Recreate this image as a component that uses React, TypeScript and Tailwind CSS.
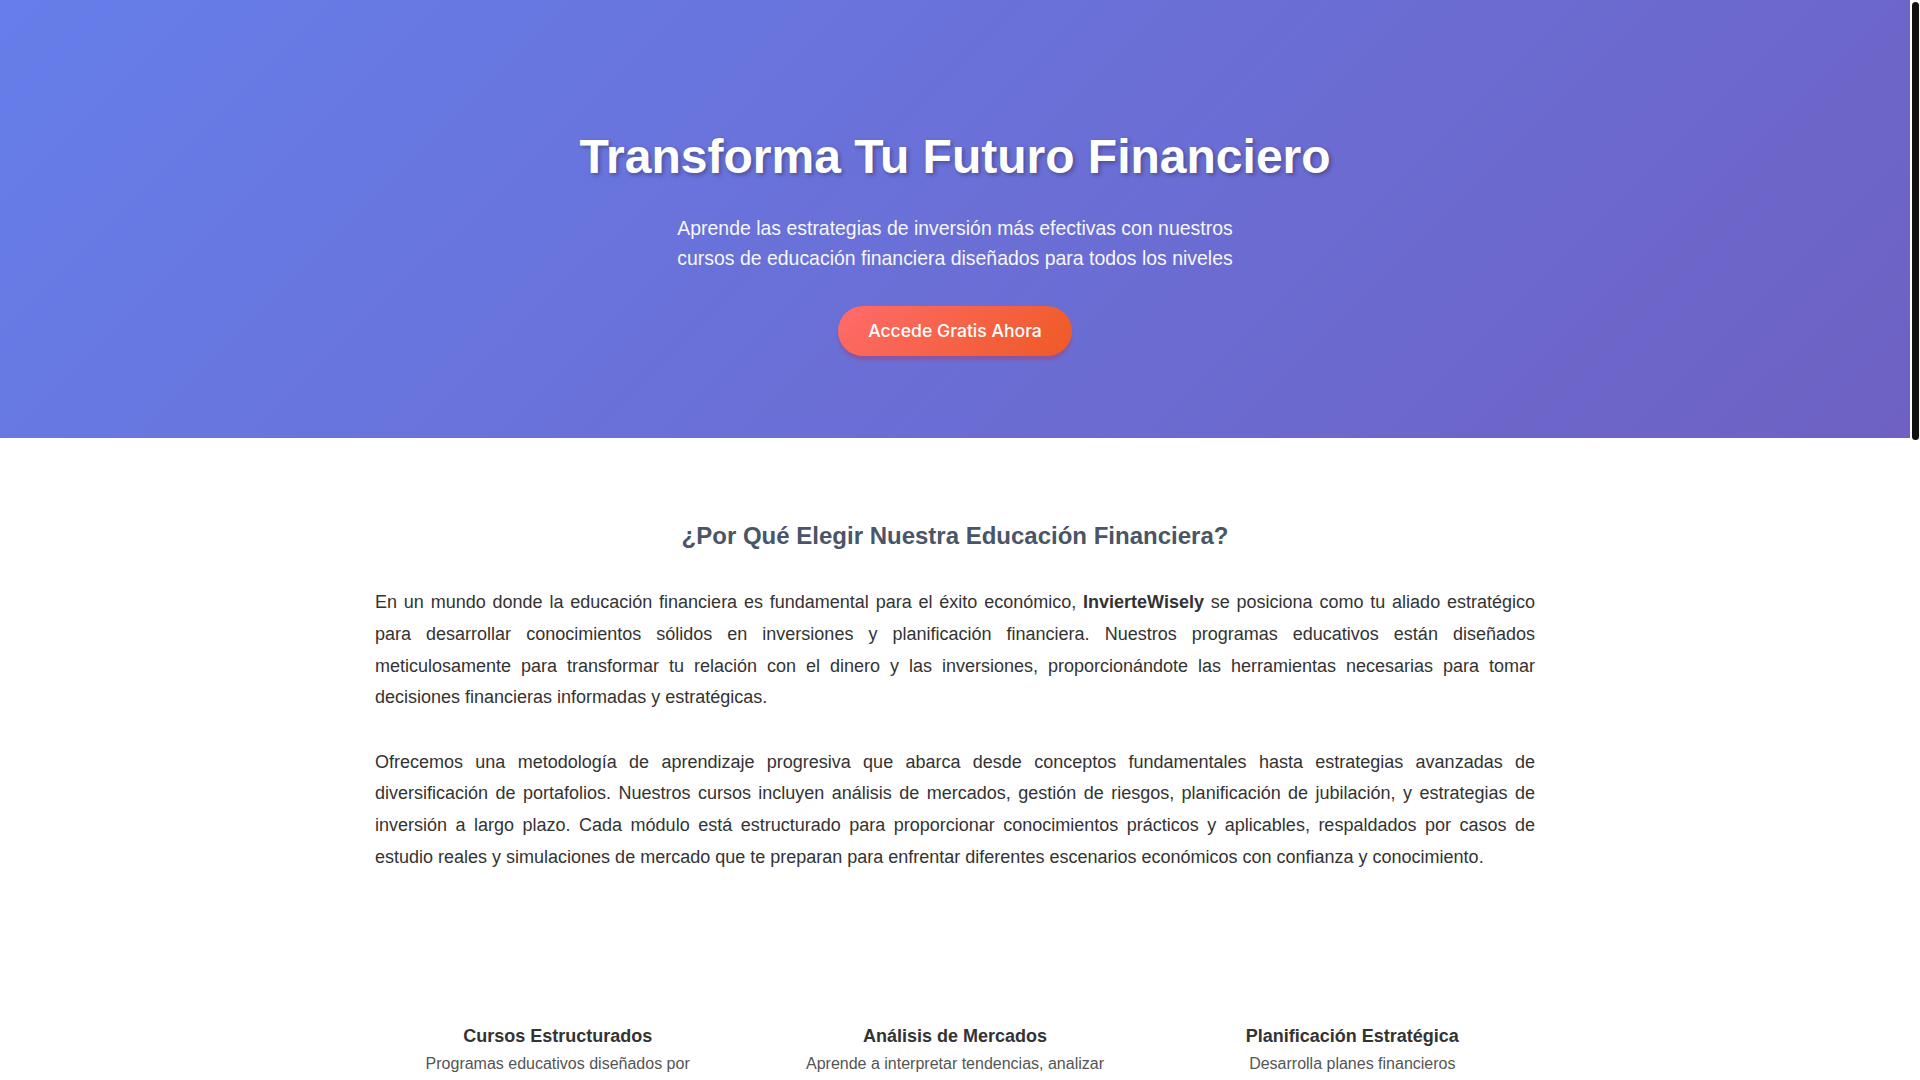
import React from "react";

const features = [
  {
    title: "Cursos Estructurados",
    text: "Programas educativos diseñados por expertos en finanzas, organizados desde el nivel básico hasta el avanzado.",
  },
  {
    title: "Análisis de Mercados",
    text: "Aprende a interpretar tendencias, analizar datos económicos y tomar decisiones de inversión fundamentadas.",
  },
  {
    title: "Planificación Estratégica",
    text: "Desarrolla planes financieros personalizados para alcanzar tus metas a corto, mediano y largo plazo.",
  },
];

const courses = [
  { name: "Fundamentos de Inversión", level: "Principiante", weeks: "6 semanas" },
  { name: "Gestión de Portafolios", level: "Intermedio", weeks: "8 semanas" },
  { name: "Estrategias Avanzadas", level: "Avanzado", weeks: "10 semanas" },
];

export default function App() {
  return (
    <div className="flex min-h-screen bg-white font-['Liberation_Sans',Arial,sans-serif]">
      <main className="flex-1 min-w-0">
        <section className="bg-[linear-gradient(135deg,#667eea_0%,#6e61c3_100%)] text-white text-center pt-[128px] pb-[82px] px-5">
          <h1 className="text-[48px] font-bold leading-[1.2] mb-[27px] [text-shadow:2px_2px_4px_rgba(0,0,0,0.3)]">
            Transforma Tu Futuro Financiero
          </h1>
          <p className="text-[19.45px] leading-[30.7px] max-w-[600px] mx-auto mb-8 opacity-95">
            Aprende las estrategias de inversión más efectivas con nuestros cursos de educación financiera diseñados para todos los niveles
          </p>
          <div className="flex justify-center">
            <button className="font-['Inter',sans-serif] font-medium text-[17.6px] leading-[21.6px] px-[30px] py-[14px] rounded-full text-white bg-[linear-gradient(135deg,#ff6b6b_0%,#ee5a24_100%)] shadow-[0_4px_3px_rgba(160,70,130,0.6)]">
              Accede Gratis Ahora
            </button>
          </div>
        </section>

        <section className="pt-[84px] pb-20">
          <div className="max-w-[1200px] mx-auto px-5">
            <h2 className="text-center text-[24px] font-bold leading-[1.2] text-[#4a5568] mb-[37px]">
              ¿Por Qué Elegir Nuestra Educación Financiera?
            </h2>
            <p className="text-[18px] leading-[31.6px] text-justify text-[#333] mb-[33px]">
              En un mundo donde la educación financiera es fundamental para el éxito económico, <strong>InvierteWisely</strong> se posiciona como tu aliado estratégico para desarrollar conocimientos sólidos en inversiones y planificación financiera. Nuestros programas educativos están diseñados meticulosamente para transformar tu relación con el dinero y las inversiones, proporcionándote las herramientas necesarias para tomar decisiones financieras informadas y estratégicas.
            </p>
            <p className="text-[18px] leading-[31.6px] text-justify text-[#333]">
              Ofrecemos una metodología de aprendizaje progresiva que abarca desde conceptos fundamentales hasta estrategias avanzadas de diversificación de portafolios. Nuestros cursos incluyen análisis de mercados, gestión de riesgos, planificación de jubilación, y estrategias de inversión a largo plazo. Cada módulo está estructurado para proporcionar conocimientos prácticos y aplicables, respaldados por casos de estudio reales y simulaciones de mercado que te preparan para enfrentar diferentes escenarios económicos con confianza y conocimiento.
            </p>

            <div className="grid grid-cols-3 gap-8 mt-12">
              {features.map((f) => (
                <div key={f.title} className="text-center p-8">
                  <div className="h-[57px] mb-4" />
                  <h3 className="text-[18px] font-bold leading-[1.2] text-[#333] mb-[3px]">{f.title}</h3>
                  <p className="text-[16px] leading-[1.6] text-[#555]">{f.text}</p>
                </div>
              ))}
            </div>
          </div>
        </section>

        <section className="bg-[#f7fafc] py-20">
          <div className="max-w-[1200px] mx-auto px-5">
            <h2 className="text-center text-[24px] font-bold leading-[1.2] text-[#4a5568] mb-12">
              Nuestros Programas Destacados
            </h2>
            <div className="grid grid-cols-3 gap-8">
              {courses.map((c) => (
                <div key={c.name} className="bg-white rounded-xl p-8 shadow-[0_4px_15px_rgba(0,0,0,0.08)]">
                  <span className="inline-block text-[13px] font-bold text-white bg-[#667eea] rounded-full px-3 py-1 mb-4">
                    {c.level}
                  </span>
                  <h3 className="text-[20px] font-bold text-[#333] mb-3">{c.name}</h3>
                  <p className="text-[16px] leading-[1.6] text-[#555] mb-6">
                    Domina los conceptos clave con lecciones prácticas, ejercicios guiados y evaluaciones continuas.
                  </p>
                  <div className="flex justify-between text-[14px] text-[#718096]">
                    <span>{c.weeks}</span>
                    <span>Acceso gratuito</span>
                  </div>
                </div>
              ))}
            </div>
          </div>
        </section>

        <section className="py-20 bg-[linear-gradient(135deg,#667eea_0%,#6e61c3_100%)] text-white text-center px-5">
          <h2 className="text-[32px] font-bold mb-4">Comienza Hoy Tu Camino Hacia la Libertad Financiera</h2>
          <p className="text-[18px] leading-[1.6] max-w-[640px] mx-auto mb-8 opacity-95">
            Únete a miles de estudiantes que ya están transformando sus finanzas personales con InvierteWisely.
          </p>
          <div className="flex justify-center">
            <button className="font-['Inter',sans-serif] font-medium text-[17.6px] leading-[21.6px] px-[30px] py-[14px] rounded-full text-white bg-[linear-gradient(135deg,#ff6b6b_0%,#ee5a24_100%)]">
              Regístrate Gratis
            </button>
          </div>
        </section>

        <footer className="bg-[#2d3748] text-[#cbd5e0] py-16 px-5">
          <div className="max-w-[1200px] mx-auto grid grid-cols-3 gap-8 text-[15px] leading-[1.8]">
            <div>
              <h4 className="text-white font-bold text-[18px] mb-3">InvierteWisely</h4>
              <p>Educación financiera de calidad para todos los niveles.</p>
            </div>
            <div>
              <h4 className="text-white font-bold text-[18px] mb-3">Enlaces</h4>
              <p>Cursos</p>
              <p>Recursos</p>
              <p>Contacto</p>
            </div>
            <div>
              <h4 className="text-white font-bold text-[18px] mb-3">Legal</h4>
              <p>Política de Privacidad</p>
              <p>Términos y Condiciones</p>
            </div>
          </div>
          <p className="text-center text-[14px] text-[#a0aec0] mt-10">© 2024 InvierteWisely. Todos los derechos reservados.</p>
        </footer>
      </main>

      <aside className="w-[10px] shrink-0 bg-white" aria-hidden="true">
        <div className="sticky top-[2px] mt-[2px] mx-auto h-[438px] w-[7px] rounded-full bg-[#111]" />
      </aside>
    </div>
  );
}
